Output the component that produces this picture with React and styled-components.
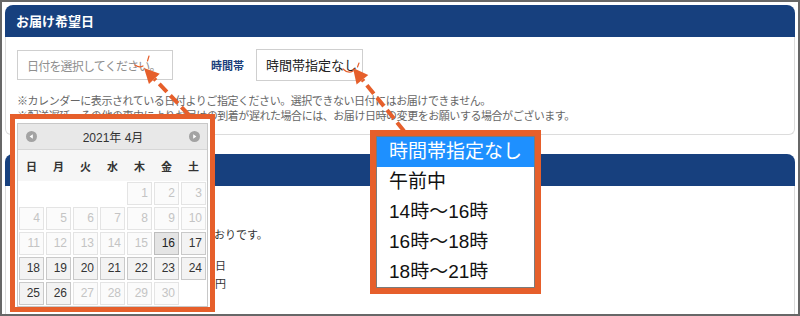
import React from 'react';
import styled, { createGlobalStyle } from 'styled-components';

const ORANGE = '#e65f2b';
const NAVY = '#17407e';

const GlobalStyle = createGlobalStyle`
  html, body {
    margin: 0;
    padding: 0;
    background: #fff;
  }
  body {
    font-family: "Noto Sans CJK JP", sans-serif;
  }
`;

const Frame = styled.div`
  position: relative;
  width: 800px;
  height: 316px;
  box-sizing: border-box;
  border: 2px solid #676767;
  padding: 3px;
  overflow: hidden;
  background: #fff;
`;

const Panel = styled.section`
  margin-bottom: ${(p) => p.$gap || 0}px;
`;

const PanelHeader = styled.h2`
  margin: 0;
  height: 32px;
  background: ${NAVY};
  border-radius: 8px 8px 0 0;
  color: #fff;
  font-size: 13px;
  font-weight: bold;
  line-height: 32px;
  padding-left: 11px;
`;

const PanelBody = styled.div`
  border: 1px solid #dcdcdc;
  border-top: 0;
  border-bottom: ${(p) => (p.$open ? '0' : '1px solid #dcdcdc')};
  border-radius: 0 0 6px 6px;
  padding: ${(p) => p.$pad};
  height: ${(p) => (p.$height ? `${p.$height}px` : 'auto')};
`;

const FieldRow = styled.div`
  display: flex;
  align-items: center;
  height: 32px;
`;

const DateInput = styled.input`
  width: 156px;
  height: 30px;
  box-sizing: border-box;
  border: 1px solid #cfcfcf;
  padding: 0 9px;
  font-family: "Noto Sans CJK JP", sans-serif;
  font-size: 12px;
  letter-spacing: -0.8px;
  color: #333;
  outline: none;
  &::placeholder {
    color: #8f8f8f;
  }
`;

const FieldLabel = styled.span`
  margin: 0 12px 0 38px;
  font-size: 11px;
  font-weight: bold;
  color: #1b3f7b;
`;

const SelectBox = styled.div`
  width: 107px;
  height: 32px;
  box-sizing: border-box;
  border: 1px solid #cfcfcf;
  padding-left: 9px;
  font-size: 13px;
  line-height: 30px;
  color: #222;
`;

const Notes = styled.div`
  margin-top: 12px;
  font-size: 11px;
  letter-spacing: -0.45px;
  line-height: 15px;
  color: #666;
`;

const Intro = styled.p`
  margin: 0;
  font-size: 11px;
  letter-spacing: -0.05px;
  line-height: 16px;
  color: #333;
`;

const Summary = styled.dl`
  margin: 14px 0 0;
  display: grid;
  grid-template-columns: 90px 119px;
  font-size: 11px;
  line-height: 18px;
  color: #333;
  dt, dd {
    margin: 0;
  }
  dd {
    text-align: right;
  }
`;

/* ---------- overlays ---------- */

const Callout = styled.div`
  position: absolute;
  left: ${(p) => p.$x - 2}px;
  top: ${(p) => p.$y - 2}px;
  border: ${(p) => p.$border}px solid ${ORANGE};
  padding: ${(p) => p.$pad || 0};
  background: #fff;
  z-index: 2;
`;

const Picker = styled.div`
  width: 191px;
  box-sizing: border-box;
  border: 1px solid #c8c8c8;
  background: #fff;
  font-family: "Liberation Sans", "Noto Sans CJK JP", sans-serif;
`;

const PickerHead = styled.div`
  height: 26px;
  box-sizing: border-box;
  display: flex;
  align-items: center;
  justify-content: space-between;
  padding: 0 7px 0 8px;
  background: #e8e8e8;
  border-bottom: 1px solid #d6d6d6;
  font-size: 12px;
  color: #333;
`;

const WeekRow = styled.div`
  display: grid;
  grid-template-columns: repeat(7, 25px);
  column-gap: 2px;
  padding: 0 1px;
  height: 31px;
  align-items: center;
  background: #f6f6f6;
  font-family: "Noto Sans CJK JP", sans-serif;
  font-size: 11px;
  font-weight: bold;
  color: #333;
  text-align: center;
`;

const DayGrid = styled.div`
  display: grid;
  grid-template-columns: repeat(7, 25px);
  grid-auto-rows: 23px;
  gap: 2px;
  padding: 1px;
`;

const dayLook = {
  empty: 'border-color: transparent; background: transparent;',
  off: 'border-color: #e4e4e4; background: #fbfbfb; color: #c4c4c4;',
  on: 'border-color: #c9c9c9; background: #f3f3f3; color: #333;',
  today: 'border-color: #bdbdbd; background: #e4e4e4; color: #222;',
};

const Day = styled.div`
  box-sizing: border-box;
  border: 1px solid;
  padding-right: 3px;
  text-align: right;
  font-size: 12px;
  line-height: 21px;
  ${(p) => dayLook[p.$kind]}
`;

const OptionList = styled.ul`
  margin: 0;
  padding: 0;
  list-style: none;
  width: 159px;
  box-sizing: border-box;
  border: 1px solid #7b7b7b;
  background: #fff;
`;

const Option = styled.li`
  height: 30px;
  padding-left: 12px;
  font-family: "Liberation Sans", "Noto Sans CJK JP", sans-serif;
  font-size: 19px;
  line-height: 30px;
  color: ${(p) => (p.$active ? '#fff' : '#111')};
  background: ${(p) => (p.$active ? '#1e90ff' : 'transparent')};
`;

const Marks = styled.svg`
  position: absolute;
  left: -2px;
  top: -2px;
  z-index: 3;
  pointer-events: none;
`;

function NavIcon({ dir }) {
  const tri = dir === 'prev' ? '6.8,3.2 3.6,5.5 6.8,7.8' : '4.2,3.2 7.4,5.5 4.2,7.8';
  return (
    <svg width="11" height="11" viewBox="0 0 11 11">
      <circle cx="5.5" cy="5.5" r="5.5" fill="#a3a3a3" />
      <polygon points={tri} fill="#fff" />
    </svg>
  );
}

const weekDays = ['日', '月', '火', '水', '木', '金', '土'];

function buildDays() {
  const cells = [];
  for (let i = 0; i < 4; i += 1) cells.push({ n: '', kind: 'empty' });
  for (let d = 1; d <= 30; d += 1) {
    let kind = 'off';
    if (d === 16) kind = 'today';
    else if (d >= 17 && d <= 26) kind = 'on';
    cells.push({ n: d, kind });
  }
  cells.push({ n: '', kind: 'empty' });
  return cells;
}

const timeSlots = ['時間帯指定なし', '午前中', '14時〜16時', '16時〜18時', '18時〜21時'];

function Arrow({ from, to }) {
  const dx = to[0] - from[0];
  const dy = to[1] - from[1];
  const len = Math.hypot(dx, dy);
  const ux = dx / len;
  const uy = dy / len;
  const bx = to[0] - ux * 15;
  const by = to[1] - uy * 15;
  const px = -uy * 7.5;
  const py = ux * 7.5;
  return (
    <g>
      <line
        x1={from[0]} y1={from[1]} x2={bx} y2={by}
        stroke={ORANGE} strokeWidth="4" strokeDasharray="11 5"
      />
      <polygon
        points={`${to[0]},${to[1]} ${bx + px},${by + py} ${bx - px},${by - py}`}
        fill={ORANGE}
      />
    </g>
  );
}

export default function App() {
  return (
    <Frame>
      <GlobalStyle />
      <Panel $gap={19}>
        <PanelHeader>お届け希望日</PanelHeader>
        <PanelBody $pad="12px 11px 11px">
          <FieldRow>
            <DateInput placeholder="日付を選択してください。" readOnly />
            <FieldLabel>時間帯</FieldLabel>
            <SelectBox>時間帯指定なし</SelectBox>
          </FieldRow>
          <Notes>
            <div>※カレンダーに表示されている日付よりご指定ください。選択できない日付にはお届けできません。</div>
            <div>※配送遅延、その他の事由によりお届けの到着が遅れた場合には、お届け日時の変更をお願いする場合がございます。</div>
          </Notes>
        </PanelBody>
      </Panel>
      <Panel>
        <PanelHeader>お支払い方法</PanelHeader>
        <PanelBody $pad="40px 11px 0" $height={120} $open>
          <Intro>ご注文の内容・お支払い金額は以下のとおりです。</Intro>
          <Summary>
            <dt>お届け予定</dt>
            <dd>ご注文から3〜5日</dd>
            <dt>送料</dt>
            <dd>全国一律 800円</dd>
          </Summary>
        </PanelBody>
      </Panel>

      <Callout $x={10} $y={114} $border={5} $pad="4px 2px 0">
        <Picker>
          <PickerHead>
            <NavIcon dir="prev" />
            <span>2021年 4月</span>
            <NavIcon dir="next" />
          </PickerHead>
          <WeekRow>
            {weekDays.map((w) => <span key={w}>{w}</span>)}
          </WeekRow>
          <DayGrid>
            {buildDays().map((c, i) => (
              <Day key={i} $kind={c.kind}>{c.n}</Day>
            ))}
          </DayGrid>
        </Picker>
      </Callout>

      <Callout $x={370} $y={130} $border={6}>
        <OptionList>
          {timeSlots.map((t, i) => (
            <Option key={t} $active={i === 0}>{t}</Option>
          ))}
        </OptionList>
      </Callout>

      <Marks width="800" height="316" viewBox="0 0 800 316">
        <Arrow from={[189, 115]} to={[144, 68]} />
        <Arrow from={[404, 131]} to={[353, 68]} />
        <g stroke={ORANGE} strokeWidth="1.2" fill="none" strokeLinecap="round">
          <path d="M149 56 L147.5 61" />
          <path d="M135 65 Q139 68 143 66" />
          <path d="M359 63 L357.5 67" />
          <path d="M343 69 Q348 74 353 71" />
        </g>
      </Marks>
    </Frame>
  );
}
